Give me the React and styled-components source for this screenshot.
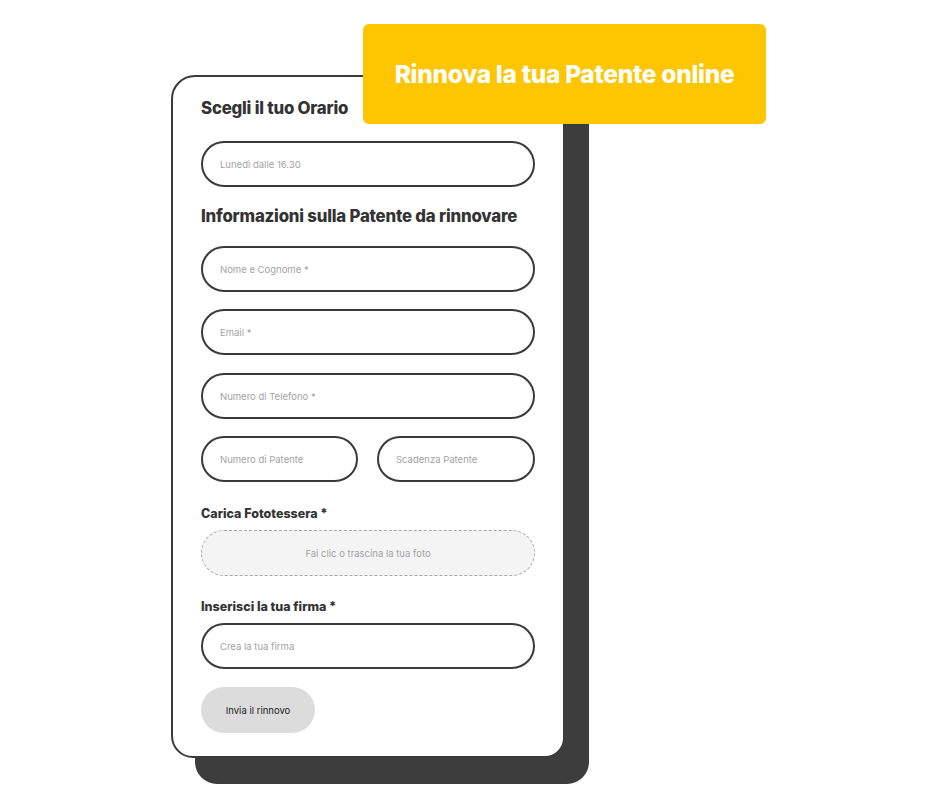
import React from 'react';
import styled, { createGlobalStyle } from 'styled-components';

const Global = createGlobalStyle`
  body {
    margin: 0;
    background: #ffffff;
    font-family: Inter, "Noto Sans", sans-serif;
  }
`

const Page = styled.div`
  width: 950px;
  height: 800px;
  padding: 75px 0 0 171px;
  box-sizing: border-box;
`

const Stage = styled.div`
  position: relative;
  width: 394px;
`

const Shadow = styled.div`
  position: absolute;
  top: 25px;
  left: 24px;
  width: 100%;
  height: calc(100% + 1px);
  background: #3d3d3d;
  border-radius: 22px;
  z-index: 0;
`

const Banner = styled.div`
  position: absolute;
  top: -51px;
  left: 192px;
  width: 403px;
  height: 100px;
  background: #fdc600;
  border-radius: 6px;
  display: flex;
  align-items: center;
  justify-content: center;
  color: #fff;
  font-size: 24.5px;
  font-weight: 800;
  letter-spacing: -0.3px;
  z-index: 2;
`

const Card = styled.form`
  position: relative;
  z-index: 1;
  background: #fff;
  border: 2px solid #3a3a3a;
  border-radius: 24px 22px 20px 22px;
  padding: 21px 28px 23px 28px;
  display: flex;
  flex-direction: column;
`

const Title = styled.h2`
  margin: ${p => p.$top || 0}px 0 0;
  font-size: 16.8px;
  line-height: 20px;
  font-weight: 800;
  color: #333;
  letter-spacing: -0.2px;
`

const Label = styled.div`
  margin-top: ${p => p.$top}px;
  font-size: 12.5px;
  line-height: 16px;
  font-weight: 800;
  color: #333;
`

const Field = styled.div`
  height: 46px;
  box-sizing: border-box;
  border: 2px solid #3a3a3a;
  border-radius: 23px;
  display: flex;
  align-items: center;
  padding-left: 17px;
  font-size: 9.5px;
  color: #a3a3a3;
  margin-top: ${p => p.$top}px;
`

const Pair = styled.div`
  display: grid;
  grid-template-columns: 157px 158px;
  justify-content: space-between;
  margin-top: 17px;
`

const Drop = styled.div`
  margin-top: 8px;
  height: 46px;
  box-sizing: border-box;
  border: 1px dashed #a8a8a8;
  border-radius: 23px;
  background: #f4f4f4;
  display: flex;
  align-items: center;
  justify-content: center;
  font-size: 9.5px;
  color: #a3a3a3;
`

const Button = styled.div`
  margin-top: 18px;
  width: 114px;
  height: 46px;
  border-radius: 23px;
  background: #dcdcdc;
  display: flex;
  align-items: center;
  justify-content: center;
  font-size: 9.5px;
  color: #222;
`

export default function App() {
  return (
    <Page>
      <Global />
      <Stage>
        <Shadow />
        <Banner>Rinnova la tua Patente online</Banner>
        <Card>
          <Title>Scegli il tuo Orario</Title>
          <Field $top={23}>Lunedì dalle 16.30</Field>
          <Title $top={19}>Informazioni sulla Patente da rinnovare</Title>
          <Field $top={20}>Nome e Cognome *</Field>
          <Field $top={17}>Email *</Field>
          <Field $top={18}>Numero di Telefono *</Field>
          <Pair>
            <Field $top={0}>Numero di Patente</Field>
            <Field $top={0}>Scadenza Patente</Field>
          </Pair>
          <Label $top={24}>Carica Fototessera *</Label>
          <Drop>Fai clic o trascina la tua foto</Drop>
          <Label $top={23}>Inserisci la tua firma *</Label>
          <Field $top={8}>Crea la tua firma</Field>
          <Button>Invia il rinnovo</Button>
        </Card>
      </Stage>
    </Page>
  )
}
